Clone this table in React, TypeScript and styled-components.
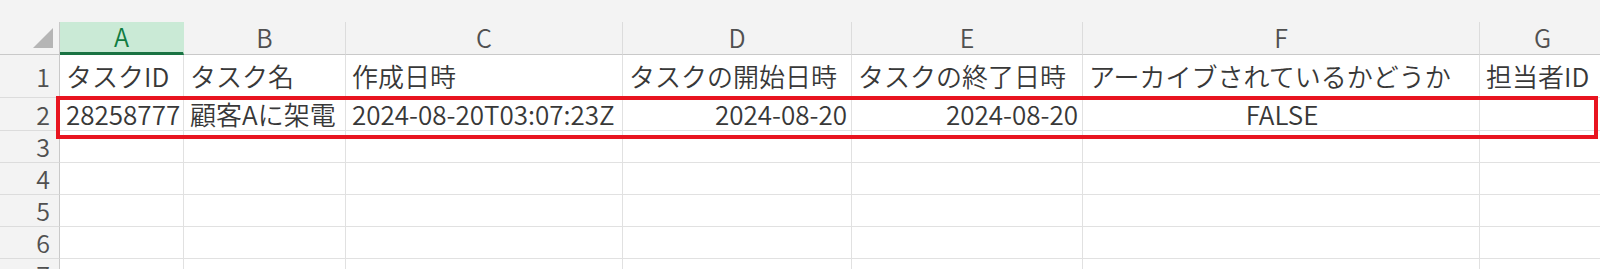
import React from "react";
import styled, { createGlobalStyle } from "styled-components";

const columns = [
  { key: "A", width: 124 },
  { key: "B", width: 162 },
  { key: "C", width: 277 },
  { key: "D", width: 229 },
  { key: "E", width: 231 },
  { key: "F", width: 397 },
  { key: "G", width: 126 },
];

type Align = "left" | "right" | "center";

const rows: { cells: { text: string; align?: Align }[] }[] = [
  {
    cells: [
      { text: "タスクID" },
      { text: "タスク名" },
      { text: "作成日時" },
      { text: "タスクの開始日時" },
      { text: "タスクの終了日時" },
      { text: "アーカイブされているかどうか" },
      { text: "担当者ID" },
    ],
  },
  {
    cells: [
      { text: "28258777", align: "left" },
      { text: "顧客Aに架電" },
      { text: "2024-08-20T03:07:23Z" },
      { text: "2024-08-20", align: "right" },
      { text: "2024-08-20", align: "right" },
      { text: "FALSE", align: "center" },
      { text: "" },
    ],
  },
  { cells: [] },
  { cells: [] },
  { cells: [] },
  { cells: [] },
  { cells: [] },
];

const rowHeights = [43, 33, 32, 32, 32, 32, 32];

const App: React.FC = () => {
  return (
    <>
      <GlobalStyle />
      <Frame>
        <TopStrip />
        <Grid>
          {/* Column headers */}
          <Corner>
            <Triangle />
          </Corner>
          {columns.map((col) => (
            <ColHeader key={col.key} $selected={col.key === "A"}>
              {col.key}
            </ColHeader>
          ))}

          {/* Rows */}
          {rows.map((row, r) => (
            <React.Fragment key={r}>
              <RowHead $height={rowHeights[r]}>{r + 1}</RowHead>
              {columns.map((col, c) => {
                const cell = row.cells[c];
                return (
                  <Cell key={col.key} $height={rowHeights[r]} $align={cell?.align || "left"}>
                    {cell?.text}
                  </Cell>
                );
              })}
            </React.Fragment>
          ))}
        </Grid>

        {/* Highlight box around row 2 */}
        <Highlight />
      </Frame>
    </>
  );
};

const GlobalStyle = createGlobalStyle`
  html, body {
    margin: 0;
    padding: 0;
    background: #ffffff;
  }
  body {
    font-family: "Noto Sans CJK JP", "Noto Sans", sans-serif;
    overflow: hidden;
  }
`;

const Frame = styled.div`
  position: relative;
  width: 1600px;
  height: 269px;
  overflow: hidden;
  background: #ffffff;
`;

const TopStrip = styled.div`
  height: 22px;
  background: #f3f3f3;
`;

const Grid = styled.div`
  display: grid;
  grid-template-columns: 60px ${columns.map((c) => `${c.width}px`).join(" ")};
  grid-template-rows: 33px;
  grid-auto-rows: auto;
`;

const Corner = styled.div`
  position: relative;
  box-sizing: border-box;
  height: 33px;
  background: #f3f3f3;
  border-right: 1px solid #c9c9c9;
  border-bottom: 1px solid #c9c9c9;
`;

const Triangle = styled.div`
  position: absolute;
  left: 33px;
  top: 6px;
  width: 20px;
  height: 20px;
  background: #b5b5b5;
  clip-path: polygon(100% 0, 100% 100%, 0 100%);
`;

const ColHeader = styled.div<{ $selected?: boolean }>`
  box-sizing: border-box;
  height: 33px;
  display: flex;
  align-items: center;
  justify-content: center;
  font-size: 25px;
  font-weight: 350;
  line-height: 1;
  padding-bottom: 2px;
  color: ${(p) => (p.$selected ? "#107c41" : "#505050")};
  background: ${(p) => (p.$selected ? "#caead6" : "#f3f3f3")};
  border-right: 1px solid ${(p) => (p.$selected ? "#caead6" : "#dcdcdc")};
  border-bottom: ${(p) => (p.$selected ? "3px solid #1a7343" : "1px solid #c9c9c9")};
`;

const RowHead = styled.div<{ $height: number }>`
  box-sizing: border-box;
  height: ${(p) => p.$height}px;
  display: flex;
  align-items: center;
  justify-content: flex-end;
  padding-right: 9px;
  font-size: 25px;
  font-weight: 350;
  line-height: 1;
  color: #505050;
  background: #f3f3f3;
  border-right: 1px solid #c9c9c9;
  border-bottom: 1px solid #dcdcdc;
`;

const Cell = styled.div<{ $height: number; $align: Align }>`
  box-sizing: border-box;
  height: ${(p) => p.$height}px;
  display: flex;
  align-items: center;
  justify-content: ${(p) =>
    p.$align === "right" ? "flex-end" : p.$align === "center" ? "center" : "flex-start"};
  padding: 0 4px 0 6px;
  font-size: 26px;
  font-weight: 350;
  line-height: 1;
  white-space: nowrap;
  color: #383838;
  border-right: 1px solid #e1e1e1;
  border-bottom: 1px solid #e1e1e1;
`;

const Highlight = styled.div`
  position: absolute;
  left: 56px;
  top: 96px;
  width: 1542px;
  height: 43px;
  box-sizing: border-box;
  border: 4px solid #e8141f;
  pointer-events: none;
`;

export default App;
